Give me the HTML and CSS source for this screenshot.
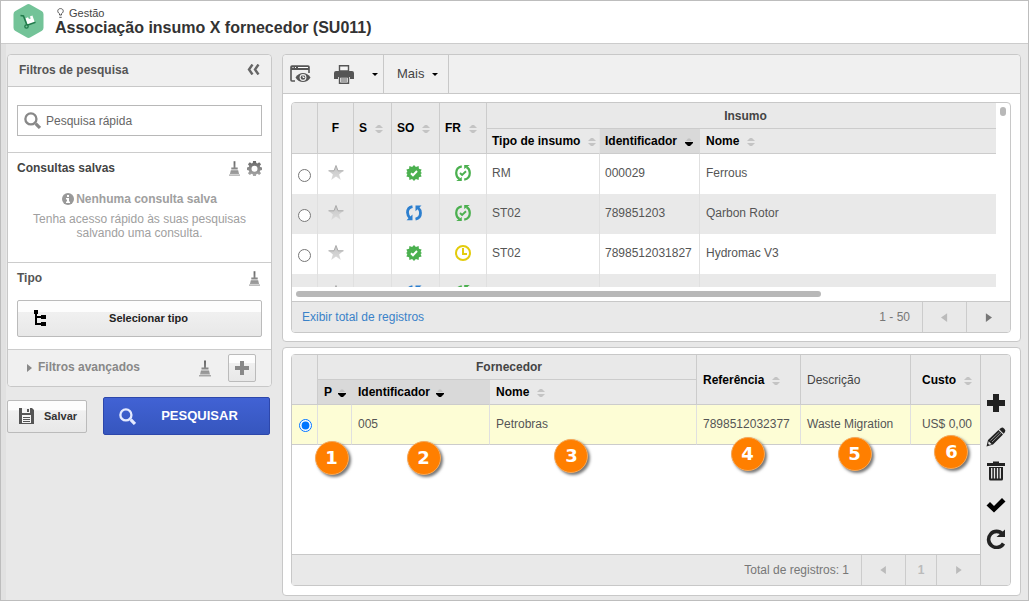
FILE: index.html
```
<!DOCTYPE html>
<html lang="pt-BR">
<head>
<meta charset="utf-8">
<title>Associação insumo X fornecedor (SU011)</title>
<link rel="stylesheet" href="styles.css">
</head>
<body>
<svg class="defs" width="0" height="0" aria-hidden="true">
  <defs>
    <linearGradient id="metal" x1="0" y1="0" x2="0" y2="1"><stop offset="0" stop-color="#666"/><stop offset="1" stop-color="#aaa"/></linearGradient>
    <linearGradient id="silver" x1="0" y1="0" x2="0" y2="1"><stop offset="0" stop-color="#c4c4c4"/><stop offset="1" stop-color="#dcdcdc"/></linearGradient>
    <symbol id="sort" viewBox="0 0 8 8"><path d="M0 3h8L5 0H3z" fill="#c4c4c4"/><path d="M0 5h8L5 8H3z" fill="#c4c4c4"/></symbol>
    <symbol id="sort-on" viewBox="0 0 8 8"><path d="M1 3h6L5 0.500H3z" fill="#c0c0c0"/><path d="M0 4h8v1L5 8H3L0 5z" fill="#000"/></symbol>
    <symbol id="star" viewBox="0 0 16 16"><path d="M8 .5l2 5.300h5.500l-4.400 3.600 1.700 5.600L8 11.600 3.200 15l1.700-5.600L.5 5.800H6z" fill="url(#silver)"/><path d="M.5 5.800H6l2-5.300 2 5.300h5.500" fill="none" stroke="#aaa" stroke-width="1"/></symbol>
    <symbol id="seal" viewBox="0 0 16 16"><path d="M8 0l1.900 2L12.600.900l.3 2.900 2.700.7-1 2.500L16 8l-1.400 1 1 2.500-2.700.7-.3 2.900L9.900 14 8 16l-1.900-2-2.700 1.100-.3-2.900-2.700-.7 1-2.500L0 8l1.400-1-1-2.500 2.700-.7.3-2.900L6.100 2z" fill="#4bb04f"/><path d="M5 8.200l2 2L11 6" fill="none" stroke="#fff" stroke-width="2"/></symbol>
    <symbol id="cycle" viewBox="0 0 16 16"><g fill="none" stroke="currentColor" stroke-width="2.800"><path d="M6.500 1.600C3 2.200 1.500 4.500 1.500 7.600c0 2.500.8 4 2.800 5.900"/><path d="M9.500 14.100c3.500-.6 5-2.900 5-6 0-2.500-.8-4-2.800-5.900"/></g><path d="M.5 15.200h6V9.500zM15.500.5h-6v5.700z" fill="currentColor"/></symbol>
    <symbol id="cycle-ok" viewBox="0 0 16 16"><g fill="none" stroke="currentColor" stroke-width="2.200"><path d="M6.800 1.300C3 2 1.200 4.700 1.200 8c0 2.700 1 4.700 3.300 6"/><path d="M9.200 14.700c3.800-.7 5.600-3.400 5.600-6.700 0-2.700-1-4.700-3.300-6"/></g><path d="M5 8l2.100 2L11 6.300" fill="none" stroke="currentColor" stroke-width="1.900"/><path d="M1.200 16h5.600v-4zM14.800 0H9.200v4z" fill="currentColor"/></symbol>
    <symbol id="clock" viewBox="0 0 16 16"><circle cx="8" cy="8" r="7" fill="none" stroke="#e3cc0d" stroke-width="2"/><path d="M8 3v6h4" fill="none" stroke="#e3cc0d" stroke-width="2"/></symbol>
    <symbol id="broom" viewBox="0 0 12 16"><path d="M5 0h2v7h2.500v2h-7V7H5zM2 10h8l1 4H1zM0 14.500h12V16H0z" fill="url(#metal)"/></symbol>
    <symbol id="lens" viewBox="0 0 16 16"><circle cx="6.500" cy="6.500" r="5.200" fill="none" stroke="currentColor" stroke-width="2.200"/><path d="M11 11l4 4" stroke="currentColor" stroke-width="3"/></symbol>
    <symbol id="prev" viewBox="0 0 8 10"><path d="M7 0v10L0 5z" fill="currentColor"/></symbol>
    <symbol id="next" viewBox="0 0 8 10"><path d="M1 0v10l7-5z" fill="currentColor"/></symbol>
    <symbol id="down" viewBox="0 0 6 3"><path d="M0 0h6L3 3z" fill="#000"/></symbol>
  </defs>
</svg>

<div class="window">
  <header class="top">
    <svg class="logo" width="31" height="34" viewBox="0 0 31 34" aria-hidden="true">
      <path d="M13.500.7a4 4 0 0 1 4 0l11.500 6.500a4 4 0 0 1 1.500 3v13.600a4 4 0 0 1-1.500 3l-11.500 6.500a4 4 0 0 1-4 0L2 26.800a4 4 0 0 1-1.500-3V10.200A4 4 0 0 1 2 7.200z" fill="#73c398"/>
      <path d="M12.500 14.200l2.500-1 1 1.800 1.800-.6-1-1.800 2.600-1 2.500 6.800-7.200 2.600z" fill="#fff"/>
      <path d="M7.500 11.500l3 .5 3.500 9.300 8.500-3" fill="none" stroke="#217a4b" stroke-width="1.500"/>
      <circle cx="13.500" cy="22.500" r="1.700" fill="#73c398" stroke="#217a4b" stroke-width="1.300"/>
    </svg>
    <div class="titles">
      <div class="crumb">
        <svg width="7" height="10" viewBox="0 0 7 10" aria-hidden="true"><path d="M2.500 7V5.700C-.3 4 .5.600 3.500.6s3.800 3.400 1 5.100V7zM2.300 9.300h2.400" fill="none" stroke="#555"/></svg>
        <span>Gestão</span>
      </div>
      <h1>Associação insumo X fornecedor (SU011)</h1>
    </div>
  </header>

  <div class="content">
    <aside class="side">
      <div class="card filters">
        <div class="filters-head">
          <h2>Filtros de pesquisa</h2>
          <button class="bare" aria-label="Recolher"><svg width="13" height="11" viewBox="0 0 13 11"><path d="M5.500.5l-3.500 5 3.500 5M11.500.5L8 5.500l3.500 5" fill="none" stroke="#666" stroke-width="2.400"/></svg></button>
        </div>
        <div class="section">
          <div class="search">
            <svg width="17" height="17" aria-hidden="true"><use href="#lens"/></svg>
            <input type="text" placeholder="Pesquisa rápida" aria-label="Pesquisa rápida">
          </div>
        </div>
        <div class="section saved">
          <div class="row">
            <h2>Consultas salvas</h2>
            <button class="bare" aria-label="Limpar consultas"><svg width="11" height="15"><use href="#broom"/></svg></button>
            <button class="bare" aria-label="Configurar"><svg width="15" height="15" viewBox="0 0 16 16"><path fill-rule="evenodd" d="M6.500 0h3l.4 2.200 1.200.5L13 1.400 15 3.500l-1.400 1.800.5 1.200 2 .4v2.800l-2 .4-.5 1.200L15 13.100 13 15l-1.900-1.300-1.200.5-.4 1.800h-3l-.4-1.800-1.200-.5L3 15l-2-1.900 1.400-1.800-.5-1.200-1.900-.4V6.900l1.900-.4.500-1.200L1 3.500l2-2.100 1.900 1.300 1.200-.5zM8 5a3.200 3.200 0 1 0 0 6.400A3.200 3.200 0 0 0 8 5z" fill="url(#metal)"/></svg></button>
          </div>
          <p class="empty"><svg width="12" height="12" viewBox="0 0 12 12" aria-hidden="true"><circle cx="6" cy="6" r="6" fill="#999"/><path d="M5 2h2v2H5zM4 5h3v3.500h1V10H4V8.500h1v-2H4z" fill="#fff"/></svg><b>Nenhuma consulta salva</b></p>
          <p class="hint">Tenha acesso rápido às suas pesquisas<br>salvando uma consulta.</p>
        </div>
        <div class="section type">
          <div class="row">
            <h2 class="soft">Tipo</h2>
            <button class="bare" aria-label="Limpar tipo"><svg width="11" height="15"><use href="#broom"/></svg></button>
          </div>
          <button class="btn pick"><svg width="12" height="16" viewBox="0 0 12 16" aria-hidden="true"><path d="M0 0h4v4H0zM7 5h5v4H7zM7 12h5v4H7zM1 4h2v2h4v2H3v5h4v2H1z"/></svg><span>Selecionar tipo</span></button>
        </div>
        <div class="advanced">
          <svg width="5" height="8" viewBox="0 0 5 8" aria-hidden="true"><path d="M0 0v8l5-4z" fill="#888"/></svg>
          <h2>Filtros avançados</h2>
          <button class="bare" aria-label="Limpar filtros"><svg width="12" height="17"><use href="#broom"/></svg></button>
          <button class="btn add" aria-label="Adicionar filtro"><svg width="14" height="14" viewBox="0 0 14 14"><path d="M5 0h4v5h5v4H9v5H5V9H0V5h5z" fill="#888"/></svg></button>
        </div>
      </div>
      <div class="side-actions">
        <button class="btn save"><svg width="15" height="16" viewBox="0 0 15 16" aria-hidden="true"><path d="M0 0h13l2 2v14H0z" fill="#555"/><path d="M3 0h8v5H3zM3 7h9v8H3z" fill="#f4f4f4"/><path d="M8 1h2v3H8zM4 9h7v1H4zM4 11h7v1H4zM4 13h7v1H4z" fill="#555"/></svg><span>Salvar</span></button>
        <button class="go"><svg width="17" height="17" aria-hidden="true"><use href="#lens"/></svg><span>PESQUISAR</span></button>
      </div>
    </aside>

    <main class="main">
      <section class="card items">
        <div class="toolbar">
          <div class="group">
            <button class="bare" aria-label="Visualizar"><svg width="21" height="18" viewBox="0 0 21 18"><path d="M5 16H2a1 1 0 0 1-1-1V2a1 1 0 0 1 1-1h16a1 1 0 0 1 1 1v6" fill="none" stroke="#555" stroke-width="1.600"/><path d="M1 1h18v4H1z" fill="#555"/><path d="M2.500 2.500h1M5 2.500h1M8 2.500h10" stroke="#fff"/><path d="M5.500 12.500C9 6.500 17 6.500 20.500 12.500 17 18.500 9 18.500 5.500 12.500z" fill="#555"/><circle cx="13" cy="12.500" r="3.400" fill="#f0f0f0"/><circle cx="13" cy="12.500" r="2.300" fill="#555"/><path d="M13 10.500v2h1.500" stroke="#fff" fill="none"/></svg></button>
            <button class="bare" aria-label="Imprimir"><svg width="20" height="19" viewBox="0 0 20 19"><path d="M5.500.7h9V6h-9z" fill="#f4f4f4" stroke="#555" stroke-width="1.400"/><path d="M2 6h16a2 2 0 0 1 2 2v6h-4v-2H4v2H0V8a2 2 0 0 1 2-2z" fill="#555"/><path d="M5.500 12h9v6.300h-9z" fill="#f4f4f4" stroke="#555" stroke-width="1.400"/><path d="M7 14h6M7 16h6" stroke="#555"/></svg></button>
            <button class="bare" aria-label="Opções de impressão"><svg width="6" height="3"><use href="#down"/></svg></button>
          </div>
          <button class="more">Mais <svg width="6" height="3"><use href="#down"/></svg></button>
        </div>
        <div class="grid">
          <div class="viewport">
            <div class="clip">
              <table class="t-items">
                <colgroup><col class="w-pick"><col class="w-f"><col class="w-s"><col class="w-so"><col class="w-fr"><col class="w-kind"><col class="w-id"><col></colgroup>
                <thead>
                  <tr><th rowspan="2" aria-label="Seleção"></th><th rowspan="2" class="fav">F</th><th rowspan="2">S<svg class="sort"><use href="#sort"/></svg></th><th rowspan="2">SO<svg class="sort"><use href="#sort"/></svg></th><th rowspan="2">FR<svg class="sort"><use href="#sort"/></svg></th><th colspan="3" class="over last">Insumo</th></tr>
                  <tr><th class="open">Tipo de insumo<svg class="sort"><use href="#sort"/></svg></th><th class="open on">Identificador<svg class="sort"><use href="#sort-on"/></svg></th><th class="last">Nome<svg class="sort"><use href="#sort"/></svg></th></tr>
                </thead>
                <tbody>
                  <tr><td class="mid"><input type="radio" name="item" aria-label="000029"></td><td class="mid"><svg class="ico"><use href="#star"/></svg></td><td></td><td class="state"><svg class="ico"><use href="#seal"/></svg></td><td class="mid green"><svg class="ico"><use href="#cycle-ok"/></svg></td><td>RM</td><td>000029</td><td class="last">Ferrous</td></tr>
                  <tr><td class="mid"><input type="radio" name="item" aria-label="789851203"></td><td class="mid"><svg class="ico"><use href="#star"/></svg></td><td></td><td class="state blue"><svg class="ico"><use href="#cycle"/></svg></td><td class="mid green"><svg class="ico"><use href="#cycle-ok"/></svg></td><td>ST02</td><td>789851203</td><td class="last">Qarbon Rotor</td></tr>
                  <tr><td class="mid"><input type="radio" name="item" aria-label="7898512031827"></td><td class="mid"><svg class="ico"><use href="#star"/></svg></td><td></td><td class="state"><svg class="ico"><use href="#seal"/></svg></td><td class="mid"><svg class="ico"><use href="#clock"/></svg></td><td>ST02</td><td>7898512031827</td><td class="last">Hydromac V3</td></tr>
                  <tr><td></td><td class="mid"><svg class="ico"><use href="#star"/></svg></td><td></td><td class="state blue"><svg class="ico"><use href="#cycle"/></svg></td><td class="mid green"><svg class="ico"><use href="#cycle-ok"/></svg></td><td></td><td></td><td class="last"></td></tr>
                </tbody>
              </table>
            </div>
            <div class="vbar"><i></i></div>
          </div>
          <div class="hbar"><i></i></div>
          <div class="foot">
            <a href="#">Exibir total de registros</a>
            <span class="count">1 - 50</span>
            <button class="page" aria-label="Página anterior" disabled><svg width="7" height="9"><use href="#prev"/></svg></button>
            <button class="page live" aria-label="Próxima página"><svg width="7" height="9"><use href="#next"/></svg></button>
          </div>
        </div>
      </section>

      <section class="card suppliers">
        <div class="grid split">
          <div class="pane">
            <table class="t-suppliers">
              <colgroup><col class="w-pick"><col class="w-p"><col class="w-code"><col><col class="w-ref"><col class="w-desc"><col class="w-cost"></colgroup>
              <thead>
                <tr><th rowspan="2" aria-label="Seleção"></th><th colspan="3" class="over">Fornecedor</th><th rowspan="2">Referência<svg class="sort"><use href="#sort"/></svg></th><th rowspan="2" class="plain">Descrição</th><th rowspan="2" class="last cost">Custo<svg class="sort"><use href="#sort"/></svg></th></tr>
                <tr><th class="on open">P<svg class="sort"><use href="#sort-on"/></svg></th><th class="on open">Identificador<svg class="sort"><use href="#sort-on"/></svg></th><th>Nome<svg class="sort"><use href="#sort"/></svg></th></tr>
              </thead>
              <tbody>
                <tr class="picked">
                  <td class="mid"><input type="radio" name="supplier" aria-label="Petrobras" checked></td>
                  <td><span class="pin p1">1</span></td>
                  <td>005<span class="pin p2">2</span></td>
                  <td>Petrobras<span class="pin p3">3</span></td>
                  <td>7898512032377<span class="pin p4">4</span></td>
                  <td>Waste Migration<span class="pin p5">5</span></td>
                  <td class="last money">US$ 0,00<span class="pin p6">6</span></td>
                </tr>
              </tbody>
            </table>
            <div class="foot">
              <span class="count">Total de registros: 1</span>
              <button class="page" aria-label="Página anterior" disabled><svg width="7" height="8"><use href="#prev"/></svg></button>
              <button class="page num" disabled>1</button>
              <button class="page" aria-label="Próxima página" disabled><svg width="7" height="8"><use href="#next"/></svg></button>
            </div>
          </div>
          <div class="actions">
            <button class="bare" aria-label="Adicionar"><svg width="20" height="20" viewBox="0 0 20 20"><path d="M7 1h6v6h6v6h-6v6H7v-6H1V7h6z" fill="#222"/></svg></button>
            <button class="bare" aria-label="Editar"><svg width="20" height="20" viewBox="0 0 20 20"><path d="M.5 19.500L2 13 12.500 3 17 7.500 7 17.500zM13.200 2.300L15 1q1.500-1 3 .5l.5.500q1.500 1.500.5 3l-1.300 1.800z" fill="#222"/><path d="M4.500 13.500L13.500 5M6 15l9-8.700" stroke="#aaa" stroke-width=".8"/><path d="M2.600 14.200l3.200 3-2.600.6-1-1z" fill="#e9e9e9"/></svg></button>
            <button class="bare" aria-label="Excluir"><svg width="20" height="20" viewBox="0 0 20 20"><path d="M1 2h6V.5h6V2h6v3H1z" fill="#222"/><path d="M3 6h14v12q0 1.500-1.500 1.500h-11Q3 19.500 3 18z" fill="#222"/><path d="M5.700 7v10.500M8.500 7v10.500M11.500 7v10.500M14.300 7v10.500" stroke="#e9e9e9" stroke-width="1.300"/></svg></button>
            <button class="bare" aria-label="Confirmar"><svg width="20" height="20" viewBox="0 0 20 20"><path d="M.5 10.500L4 7l4 4L16 3l3.500 3.500L8 17.500z"/></svg></button>
            <button class="bare" aria-label="Atualizar"><svg width="20" height="20" viewBox="0 0 20 20"><path d="M17.500 14.500A8 8 0 1 1 16.500 5" fill="none" stroke="#222" stroke-width="3.600"/><path d="M19 .5V8h-8.500z" fill="#222"/></svg></button>
          </div>
        </div>
      </section>
    </main>
  </div>
</div>
</body>
</html>
```
FILE: styles.css
```
* { box-sizing: border-box; }
body { margin: 0; font: 12px/16px "Liberation Sans", Arial, sans-serif; color: #555; }
h1, h2, p { margin: 0; }
h2 { font-size: 12px; line-height: 16px; color: #444; }
svg { display: block; flex: none; }
button { font: inherit; color: inherit; margin: 0; cursor: pointer; }
.defs { position: absolute; }
.bare { border: 0; background: none; padding: 0; display: flex; align-items: center; justify-content: center; }

.window { min-height: 100vh; display: flex; flex-direction: column; border: 1px solid #bdbdbd; background: #e8e8e8; }

.top { display: flex; align-items: center; gap: 11px; height: 43px; padding: 0 12px 2px; background: #fff; border-bottom: 1px solid #ccc; }
.crumb { display: flex; align-items: center; gap: 5px; padding: 0 2px; font-size: 11px; line-height: 14px; color: #444; }
h1 { font-size: 16px; line-height: 16px; color: #333; }

.content { flex: 1; display: flex; gap: 10px; padding: 10px 7px 4px 1px; border-left: 5px solid #e1e1e1; }
.side { flex: 0 0 265px; }
.main { flex: 1; min-width: 0; display: flex; flex-direction: column; gap: 5px; }
.card { background: #fff; border: 1px solid #c8c8c8; border-radius: 4px; }

.filters h2 { flex: 1; }
.filters-head { display: flex; align-items: center; height: 32px; padding: 0 11px 2px; background: #f0f0f0; border-bottom: 1px solid #c8c8c8; border-radius: 4px 4px 0 0; }
.filters .filters-head h2 { color: #555; }
.section { padding: 18px 9px 16px; border-bottom: 1px solid #ccc; }
.search { display: flex; align-items: center; gap: 5px; height: 31px; padding: 0 6px; border: 1px solid #b8b8b8; color: #888; }
.search input { flex: 1; min-width: 0; border: 0; padding: 0; outline: 0; font: inherit; color: #555; background: none; }
.search input::placeholder { color: #666; opacity: 1; }
.row { display: flex; align-items: center; gap: 7px; }
.saved { padding: 7px 9px 22px; }
.empty { display: flex; justify-content: center; align-items: center; gap: 2px; margin-top: 15px; color: #a0a0a0; }
.hint { margin-top: 5px; line-height: 14px; text-align: center; color: #a0a0a0; }
.type { padding: 7px 9px 12px; }
.filters .soft { color: #555; }
.type .row { padding-right: 2px; }
.btn { display: flex; align-items: center; border: 1px solid #bbb; border-radius: 2px; background: linear-gradient(#fdfdfd 0 30%, #f0f0f0 31%, #e8e8e8); }
.pick { width: 100%; height: 37px; margin-top: 14px; padding: 0 10px 2px 16px; font-size: 11px; font-weight: bold; color: #222; }
.pick span { flex: 1; }
.advanced { display: flex; align-items: center; height: 36px; padding: 0 15px 0 19px; background: #f0f0f0; border-radius: 0 0 4px 4px; }
.advanced h2 { padding: 0 0 2px 6px; color: #888; }
.add { justify-content: center; width: 28px; height: 28px; margin-left: 17px; padding: 0; }
.side-actions { display: flex; align-items: center; gap: 16px; margin-top: 10px; padding-right: 2px; }
.save { width: 80px; height: 33px; padding: 0 11px; gap: 10px; font-size: 11px; font-weight: bold; color: #333; }
.go { flex: 1; display: flex; align-items: center; height: 38px; padding: 0 6px 0 15px; border: 1px solid #2d47ab; border-radius: 2px; background: linear-gradient(#4162d4, #3656be); color: #e4eaff; }
.go span { flex: 1; font-size: 13px; font-weight: bold; color: #fff; }

.toolbar { display: flex; height: 39px; background: #f0f0f0; border-bottom: 1px solid #c8c8c8; border-radius: 4px 4px 0 0; }
.group { display: flex; align-items: center; gap: 23px; padding: 0 5px 0 7px; border-right: 1px solid #c8c8c8; }
.group .bare:last-child { margin-left: -5px; }
.more { display: flex; align-items: center; gap: 8px; padding: 0 10px 0 13px; border: 0; border-right: 1px solid #c8c8c8; background: none; font-size: 13px; color: #444; }

.items { padding-bottom: 8px; }
.items .grid { margin: 8px 9px 0 8px; }
.grid { border: 1px solid #c8c8c8; border-radius: 4px; overflow: hidden; }
.viewport { display: flex; height: 184px; }
.clip { flex: 1; min-width: 0; overflow: hidden; }
.vbar { width: 14px; padding: 4px; }
.vbar i { display: block; height: 9px; border-radius: 3px; background: #b8b8b8; }
.hbar { height: 14px; padding: 4px; }
.hbar i { display: block; width: 74%; height: 6px; border-radius: 3px; background: #b8b8b8; }
table { width: 100%; table-layout: fixed; border-collapse: separate; border-spacing: 0; }
th, td { padding: 0 0 0 6px; text-align: left; white-space: nowrap; border-right: 1px solid #e0e0e0; }
td { padding-bottom: 2px; }
th { background: #e9e9e9; color: #000; border-right-color: #ccc; border-bottom: 1px solid #ccc; }
thead tr:first-child { height: 26px; }
thead tr:last-child { height: 25px; }
tbody tr { height: 40px; }
tbody tr:nth-child(even) td { background: #e9e9e9; }
.t-items th:not(:last-child):not(.over), .t-items td { padding-left: 5px; }
.last { border-right: 0; }
.open { border-right-color: #e4e4e4; }
.on { background: #d9d9d9; border-right-color: #d9d9d9; }
.over { padding: 0 0 0 8px; text-align: center; color: #444; }
.t-suppliers .over { padding: 0 0 0 4px; }
.t-items td.mid { padding-left: 0; text-align: center; }
.t-suppliers td.mid { padding-left: 2px; text-align: center; }
.t-items th.fav { padding: 0 5px 0 0; text-align: center; }
.t-items td.state { padding: 0 4px 2px 0; }
.t-items td.last { padding-left: 6px; }
.plain { color: #444; font-weight: normal; }
.t-suppliers .money { padding-right: 8px; text-align: right; }
.t-suppliers .cost { padding-left: 11px; }
.sort { display: inline-block; width: 8px; height: 8px; margin-left: 8px; vertical-align: -1px; }
.t-suppliers .on .sort { margin-left: 6px; }
.ico { width: 16px; height: 16px; margin: 0 auto; }
.green { color: #4bb04f; }
.blue { color: #2c7fcf; }
input[type="radio"] { width: 13px; height: 13px; margin: 4px 0 0; vertical-align: middle; }
.w-pick { width: 26px; }
.w-f { width: 36px; }
.w-s { width: 38px; }
.w-so { width: 48px; }
.w-fr { width: 47px; }
.w-kind { width: 113px; }
.w-id { width: 100px; }
.w-p { width: 34px; }
.w-code { width: 138px; }
.w-ref { width: 104px; }
.w-desc { width: 110px; }
.w-cost { width: 69px; }

.foot { display: flex; align-items: stretch; height: 31px; background: #e9e9e9; border-top: 1px solid #c8c8c8; line-height: 30px; color: #777; }
.foot a { padding-left: 10px; color: #3a82c8; text-decoration: none; }
.count { margin-left: auto; padding-right: 12px; }
.page { display: flex; align-items: center; justify-content: center; width: 44px; padding: 0; border: 0; border-left: 1px solid #ccc; background: none; color: #bbb; }
.page.num { width: 31px; font-weight: bold; }
.live { color: #777; }

.suppliers { flex: 1; display: flex; padding: 6px 9px 9px 8px; }
.split { flex: 1; display: flex; overflow: visible; }
.pane { flex: 1; min-width: 0; display: flex; flex-direction: column; }
.pane .foot { margin-top: auto; }
.t-suppliers thead tr { height: 25px; }
.t-suppliers td { position: relative; background: #fdfdd5; border-bottom: 1px solid #ccc; }
.actions { display: flex; flex-direction: column; align-items: center; gap: 14px; width: 30px; padding-top: 38px; background: #e9e9e9; border-left: 1px solid #c8c8c8; border-radius: 0 3px 3px 0; }

.pin { position: absolute; z-index: 1; top: 32px; left: 50%; width: 34px; height: 34px; margin-left: -18px; border-radius: 50%; background: #ff7f00; border: 1px solid #f5a85a; box-shadow: 2px 2px 3px #777; color: #fff; font: bold 18px/32px "DejaVu Sans", Verdana, sans-serif; text-align: center; }
.p1 { top: 36px; left: 44%; }
.p2 { top: 36px; left: 53%; }
.p3 { top: 34px; left: 40%; }
.p6 { top: 30px; left: 60%; }
```
